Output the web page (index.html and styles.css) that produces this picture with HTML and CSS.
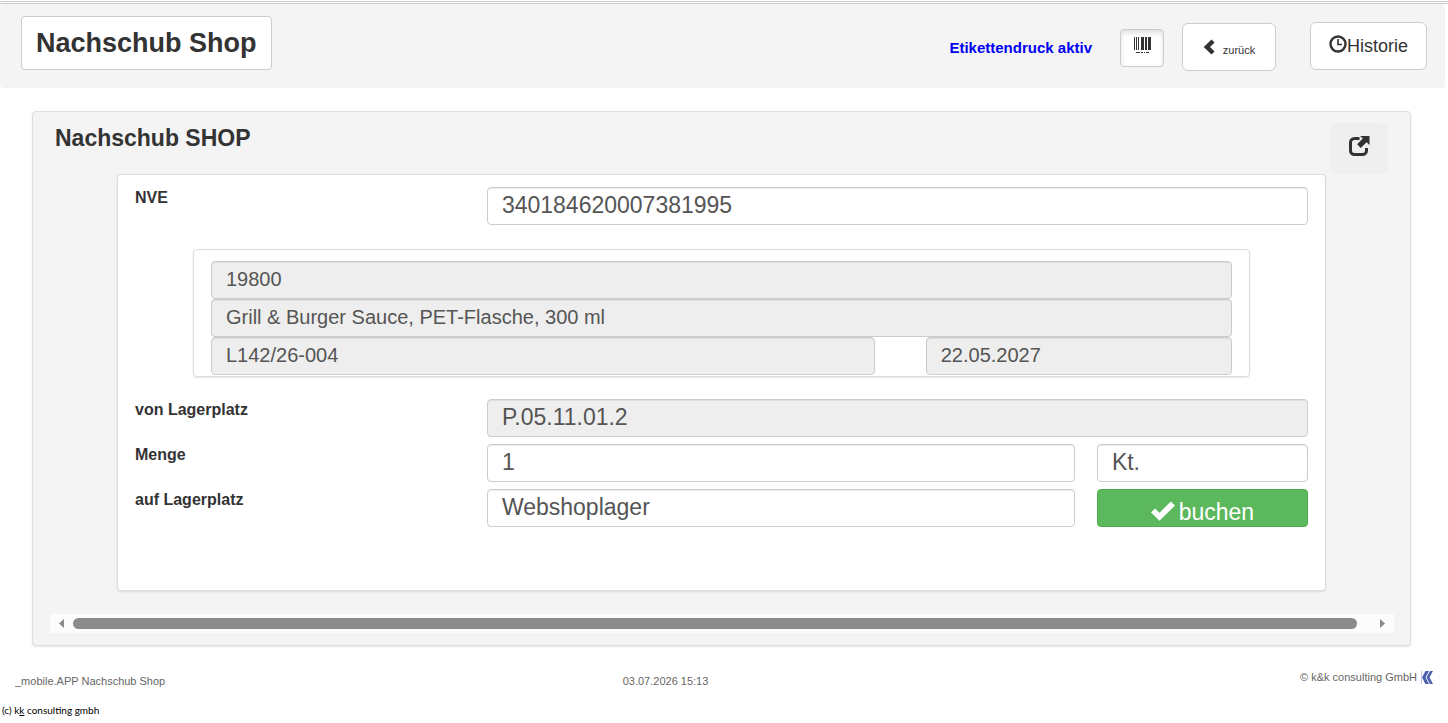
FILE: index.html
```
<!DOCTYPE html>
<html lang="de">

<head>
  <meta charset="UTF-8" />
  <meta name="viewport" content="width=device-width, initial-scale=1.0" />
  <title>Nachschub Shop</title>
  <link rel="stylesheet" href="styles.css">
</head>

<body>
  <header class="topbar">
    <button type="button" class="btn btn-title">Nachschub Shop</button>
    <span class="print-status">Etikettendruck aktiv</span>
    <button type="button" class="btn btn-barcode" aria-label="Etikettendruck">
      <svg width="17" height="17" viewBox="0 0 17 17" fill="#333" shape-rendering="crispEdges">
        <path d="M0 0h1v13H0zM2 0h1v13H2zM4 0h1v13H4zM7 0h3v13H7zM11 0h2v13h-2zM14 0h3v13h-3z" />
        <path d="M2 15h4v1H2zM7 15h2v1H7zM10 15h1v1h-1zM12 15h3v1h-3z" />
      </svg>
    </button>
    <button type="button" class="btn btn-back">
      <svg width="12" height="16" viewBox="0 0 12 16" fill="#333">
        <path d="M8.5 0.4L11.6 3.4 7 8l4.6 4.6-3.1 3L0.7 8z" />
      </svg>
      <span>zurück</span>
    </button>
    <button type="button" class="btn btn-history">
      <svg width="18" height="18" viewBox="0 0 18 18" fill="none" stroke="#333">
        <circle cx="9" cy="9" r="7.5" stroke-width="2.4" />
        <path d="M9 4v5.5h4" stroke-width="1.6" />
      </svg>
      <span>Historie</span>
    </button>
  </header>

  <main class="panel">
    <div class="panel-head">
      <h1>Nachschub SHOP</h1>
      <button type="button" class="btn-open" aria-label="In neuem Fenster öffnen">
        <svg width="22" height="22" viewBox="0 0 22 22">
          <path d="M11.5 3.5H6.5a4 4 0 0 0-4 4v8a4 4 0 0 0 4 4h8a4 4 0 0 0 4-4v-2.500" fill="none" stroke="#333" stroke-width="3" />
          <path d="M12 1h9.500v9l-3-2.800-5.700 5.700-3.700-3.700 5.700-5.600z" fill="#333" />
        </svg>
      </button>
    </div>

    <form class="box">
      <div class="row">
        <label for="nve">NVE</label>
        <input class="field wide" type="text" id="nve" value="340184620007381995" />
      </div>

      <div class="article">
        <input class="field small" type="text" value="19800" aria-label="Artikelnummer" readonly />
        <input class="field small" type="text" value="Grill &amp; Burger Sauce, PET-Flasche, 300 ml" aria-label="Bezeichnung" readonly />
        <div class="article-row">
          <input class="field small charge" type="text" value="L142/26-004" aria-label="Charge" readonly />
          <input class="field small mhd" type="text" value="22.05.2027" aria-label="MHD" readonly />
        </div>
      </div>

      <div class="row">
        <label for="von">von Lagerplatz</label>
        <input class="field wide" type="text" id="von" value="P.05.11.01.2" readonly />
      </div>
      <div class="row">
        <label for="menge">Menge</label>
        <input class="field" type="text" id="menge" value="1" />
        <input class="field last" type="text" value="Kt." aria-label="Einheit" />
      </div>
      <div class="row">
        <label for="auf">auf Lagerplatz</label>
        <input class="field" type="text" id="auf" value="Webshoplager" />
        <button type="button" class="btn-book last">
          <svg width="24" height="20" viewBox="0 0 24 20" fill="#fff">
            <path d="M0 11.500l4-4 4.500 4.300L19.800 0.500 24 4.600 8.500 19.800z" />
          </svg>
          <span>buchen</span>
        </button>
      </div>
    </form>

    <div class="scroll">
      <svg width="5" height="9" viewBox="0 0 5 9" fill="#8b8b8b"><path d="M5 0v9L0 4.500z" /></svg>
      <div class="thumb"></div>
      <svg width="5" height="9" viewBox="0 0 5 9" fill="#8b8b8b"><path d="M0 0v9l5-4.500z" /></svg>
    </div>
  </main>

  <footer>
    <div class="foot">
      <span>_mobile.APP Nachschub Shop</span>
      <span>03.07.2026 15:13</span>
      <span class="company">© k&amp;k consulting GmbH
        <svg width="12" height="13" viewBox="0 0 12 13">
          <path d="M0 0h1v13H0z" fill="#c5cbe6" />
          <path d="M4.500 0H8L4.500 6.500 8 13H4.500L1 6.500zM9 0h3L8.500 6.500 12 13H9L5.500 6.500z" fill="#4a5fae" />
        </svg>
      </span>
    </div>
    <div class="copy">(c) k<u>k</u> consulting gmbh</div>
  </footer>
</body>

</html>
```

FILE: styles.css
```
* {
  box-sizing: border-box;
}

body {
  margin: 1px 0 0;
  border-top: 3px double #ccc;
  background: #fff;
  color: #333;
  font-family: "Liberation Sans", Arial, sans-serif;
}

button,
input {
  font-family: inherit;
  color: inherit;
  margin: 0;
}

button {
  cursor: pointer;
}

svg {
  flex: none;
}

/* top bar */
.topbar {
  display: flex;
  align-items: center;
  margin-right: 3px;
  height: 84px;
  padding: 0 18px 0 21px;
  border-radius: 4px;
  background: #f4f4f4;
}

.btn {
  display: flex;
  align-items: center;
  justify-content: center;
  height: 48px;
  border: 1px solid #ccc;
  border-radius: 6px;
  background: #fff;
}

.btn-title {
  height: 54px;
  margin: 0 auto 6px 0;
  padding: 0 14px;
  border-radius: 4px;
  font-size: 27px;
  font-weight: bold;
}

.print-status {
  margin: 2px 28px 0 0;
  color: #0000f5;
  font-size: 15px;
  font-weight: bold;
}

.btn-barcode {
  width: 44px;
  height: 38px;
  margin: 4px 18px 0 0;
  padding-bottom: 6px;
  border-radius: 4px;
  box-shadow: inset 0 3px 5px rgba(0, 0, 0, 0.125);
}

.btn-back {
  gap: 8px;
  width: 94px;
  margin: 2px 34px 0 0;
  font-size: 11px;
}

.btn-back span {
  padding-top: 6px;
}

.btn-history {
  width: 117px;
  font-size: 18px;
}

.btn-history svg {
  margin-bottom: 4px;
}

/* main panel */
.panel {
  margin: 23px 37px 0 32px;
  border: 1px solid #ddd;
  border-radius: 4px;
  background: #f4f4f4;
  box-shadow: 0 1px 2px rgba(0, 0, 0, 0.1);
}

.panel-head {
  display: flex;
  justify-content: space-between;
  padding: 11px 22px 0;
}

h1 {
  margin: 0;
  font-size: 23px;
  line-height: 30px;
}

.btn-open {
  display: flex;
  justify-content: center;
  width: 58px;
  height: 51px;
  padding: 12px 0 0;
  border: none;
  border-radius: 6px;
  background: #efefef;
}

.box {
  display: flex;
  flex-direction: column;
  gap: 7px;
  margin: 0 84px;
  padding: 12px 17px 63px;
  border: 1px solid #ddd;
  border-radius: 4px;
  background: #fff;
  box-shadow: 0 1px 2px rgba(0, 0, 0, 0.1);
}

.row {
  display: grid;
  grid-template-columns: 30% 50% 18%;
}

.row label {
  font-size: 16px;
  font-weight: bold;
  line-height: 22px;
}

.row .wide {
  grid-column: 2 / 4;
}

/* fields end flush with the right edge of the box */
.row:has(.wide) {
  grid-template-columns: 30% 50% 20%;
}

.row:has(.last) {
  justify-content: space-between;
  grid-template-columns: 30% 1fr 18%;
}

.row:has(.last) .field:not(.last) {
  width: calc(100% - 22px);
}

.field {
  width: 100%;
  min-width: 0;
  height: 38px;
  padding: 0 14px 2px;
  border: 1px solid #ccc;
  border-radius: 4px;
  background: #fff;
  color: #555;
  font-size: 23px;
  box-shadow: inset 0 1px 1px rgba(0, 0, 0, 0.075);
}

.field[readonly] {
  background: #eee;
}

.field.small {
  font-size: 20px;
}

.article {
  display: flex;
  flex-direction: column;
  margin: 17px 58px 15px;
  padding: 11px 17px 1px;
  border: 1px solid #ddd;
  border-radius: 4px;
  box-shadow: 0 1px 2px rgba(0, 0, 0, 0.1);
}

.article-row {
  display: flex;
  justify-content: space-between;
}

.charge {
  width: 65%;
}

.mhd {
  width: 30%;
}

.btn-book {
  display: flex;
  align-items: center;
  justify-content: center;
  gap: 4px;
  height: 38px;
  padding: 8px 0 0;
  border: 1px solid #4cae4c;
  border-radius: 4px;
  background: #5cb85c;
  color: #fff;
  font-size: 23px;
}

.btn-book svg {
  margin-bottom: 2px;
}

/* horizontal scroll bar */
.scroll {
  display: flex;
  align-items: center;
  gap: 9px;
  height: 19px;
  margin: 23px 16px 12px 17px;
  padding: 0 9px;
  background: #fcfcfc;
}

.thumb {
  flex: 1;
  height: 11px;
  margin-right: 14px;
  border-radius: 6px;
  background: #8b8b8b;
}

/* footer */
.foot {
  display: grid;
  grid-template-columns: 3fr 3fr 1fr;
  margin: 24px 15px 0;
  color: #666;
  font-size: 11px;
  line-height: 22px;
}

.company {
  display: flex;
  align-items: center;
  justify-content: flex-end;
  gap: 4px;
  height: 14px;
  white-space: nowrap;
}

.copy {
  padding: 10px 2px 0;
  color: #000;
  font-family: Lato, sans-serif;
  font-size: 10px;
  line-height: 16px;
}
```
